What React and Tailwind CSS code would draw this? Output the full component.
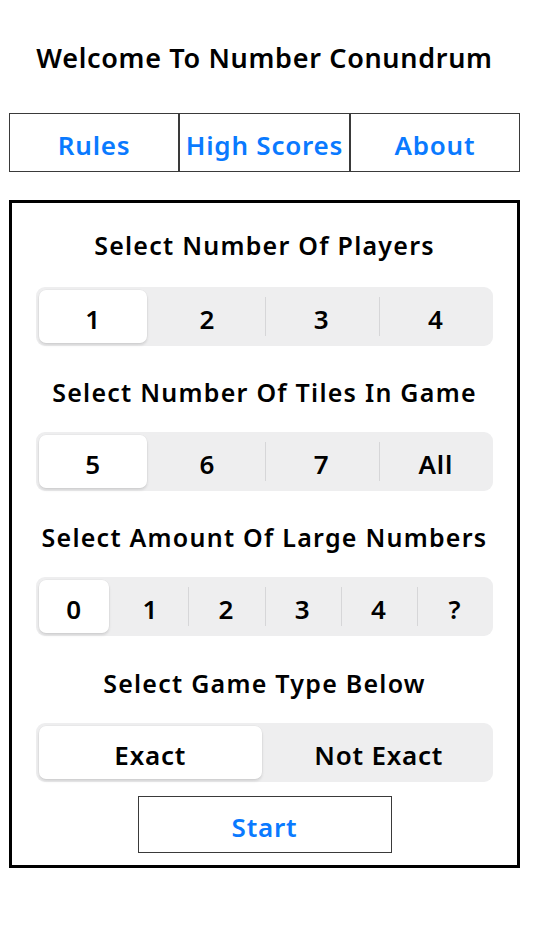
import { useState } from 'react'

const FONT = { fontFamily: '"Noto Sans", "DejaVu Sans", sans-serif' }

function Segmented({ options, selected, onSelect }) {
  return (
    <div className="flex h-[59px] rounded-[9px] bg-[#eeeeef]">
      {options.map((o, i) => {
        const active = i === selected
        const showSep = i > 0 && i !== selected && i - 1 !== selected
        return (
          <div key={o} className="relative flex flex-1 p-[3px]">
            {i > 0 && (
              <span className={`absolute left-0 top-[10px] bottom-[10px] w-px ${showSep ? 'bg-[#d6d6d8]' : 'bg-transparent'}`} />
            )}
            <button
              onClick={() => onSelect(i)}
              className={`flex-1 rounded-[7px] pt-[5px] text-[26px] font-semibold tracking-[0.03em] text-black ${active ? 'bg-white shadow-[0_2px_3px_rgba(0,0,0,0.12),0_0_0_0.5px_rgba(0,0,0,0.04)]' : ''}`}
            >
              {o}
            </button>
          </div>
        )
      })}
    </div>
  )
}

function Label({ children }) {
  return <p className="h-9 text-center text-[25px] leading-9 font-semibold tracking-[0.05em] text-black">{children}</p>
}

export default function App() {
  const [players, setPlayers] = useState(0)
  const [tiles, setTiles] = useState(0)
  const [large, setLarge] = useState(0)
  const [type, setType] = useState(0)

  return (
    <div className="min-h-[950px] bg-white pl-[9px] pr-[14px] pt-10" style={FONT}>
      <h1 className="h-9 text-center text-[27px] leading-9 font-semibold tracking-[0.025em] text-black">Welcome To Number Conundrum</h1>

      <div className="mt-[37px] flex h-[59px]">
        {['Rules', 'High Scores', 'About'].map((t) => (
          <button key={t} className="flex-1 border border-[#3a3a3a] pt-[5px] text-[26px] font-semibold tracking-[0.03em] text-[#0a7aff]">
            {t}
          </button>
        ))}
      </div>

      <div className="mt-7 border-[3px] border-black px-6 pt-6 pb-3">
        <Label>Select Number Of Players</Label>
        <div className="mt-6">
          <Segmented options={['1', '2', '3', '4']} selected={players} onSelect={setPlayers} />
        </div>

        <div className="mt-7"><Label>Select Number Of Tiles In Game</Label></div>
        <div className="mt-[22px]">
          <Segmented options={['5', '6', '7', 'All']} selected={tiles} onSelect={setTiles} />
        </div>

        <div className="mt-7"><Label>Select Amount Of Large Numbers</Label></div>
        <div className="mt-[22px]">
          <Segmented options={['0', '1', '2', '3', '4', '?']} selected={large} onSelect={setLarge} />
        </div>

        <div className="mt-[29px]"><Label>Select Game Type Below</Label></div>
        <div className="mt-[22px]">
          <Segmented options={['Exact', 'Not Exact']} selected={type} onSelect={setType} />
        </div>

        <div className="mt-[14px] flex justify-center">
          <button className="h-[57px] w-[254px] border border-[#3a3a3a] pt-[5px] text-[26px] font-semibold tracking-[0.03em] text-[#0a7aff]">Start</button>
        </div>
      </div>
    </div>
  )
}
